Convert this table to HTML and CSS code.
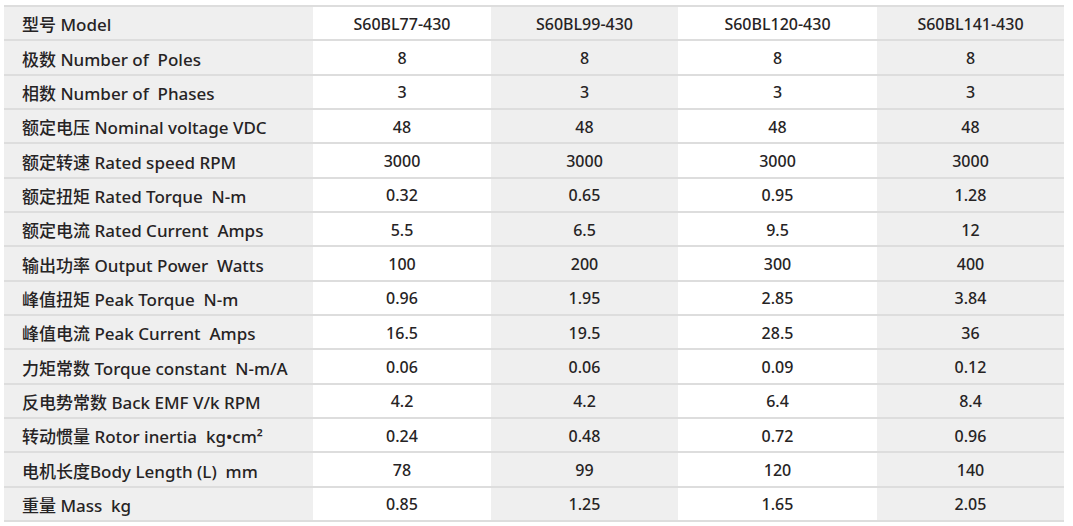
FILE: index.html
```html
<!DOCTYPE html>
<html>
<head>
<meta charset="utf-8">
<link rel="stylesheet" href="styles.css">
</head>
<body>
<div class="spec">
  <div class="row"><div class="c lbl">型号 Model</div><div class="c w">S60BL77-430</div><div class="c g">S60BL99-430</div><div class="c w">S60BL120-430</div><div class="c g">S60BL141-430</div></div>
  <div class="row"><div class="c lbl">极数 Number of&nbsp; Poles</div><div class="c w">8</div><div class="c g">8</div><div class="c w">8</div><div class="c g">8</div></div>
  <div class="row"><div class="c lbl">相数 Number of&nbsp; Phases</div><div class="c w">3</div><div class="c g">3</div><div class="c w">3</div><div class="c g">3</div></div>
  <div class="row"><div class="c lbl">额定电压 Nominal voltage VDC</div><div class="c w">48</div><div class="c g">48</div><div class="c w">48</div><div class="c g">48</div></div>
  <div class="row"><div class="c lbl">额定转速 Rated speed RPM</div><div class="c w">3000</div><div class="c g">3000</div><div class="c w">3000</div><div class="c g">3000</div></div>
  <div class="row"><div class="c lbl">额定扭矩 Rated Torque&nbsp; N-m</div><div class="c w">0.32</div><div class="c g">0.65</div><div class="c w">0.95</div><div class="c g">1.28</div></div>
  <div class="row"><div class="c lbl">额定电流 Rated Current&nbsp; Amps</div><div class="c w">5.5</div><div class="c g">6.5</div><div class="c w">9.5</div><div class="c g">12</div></div>
  <div class="row"><div class="c lbl">输出功率 Output Power&nbsp; Watts</div><div class="c w">100</div><div class="c g">200</div><div class="c w">300</div><div class="c g">400</div></div>
  <div class="row"><div class="c lbl">峰值扭矩 Peak Torque&nbsp; N-m</div><div class="c w">0.96</div><div class="c g">1.95</div><div class="c w">2.85</div><div class="c g">3.84</div></div>
  <div class="row"><div class="c lbl">峰值电流 Peak Current&nbsp; Amps</div><div class="c w">16.5</div><div class="c g">19.5</div><div class="c w">28.5</div><div class="c g">36</div></div>
  <div class="row"><div class="c lbl">力矩常数 Torque constant&nbsp; N-m/A</div><div class="c w">0.06</div><div class="c g">0.06</div><div class="c w">0.09</div><div class="c g">0.12</div></div>
  <div class="row"><div class="c lbl">反电势常数 Back EMF V/k RPM</div><div class="c w">4.2</div><div class="c g">4.2</div><div class="c w">6.4</div><div class="c g">8.4</div></div>
  <div class="row"><div class="c lbl">转动惯量 Rotor inertia&nbsp; kg•cm²</div><div class="c w">0.24</div><div class="c g">0.48</div><div class="c w">0.72</div><div class="c g">0.96</div></div>
  <div class="row"><div class="c lbl">电机长度Body Length (L)&nbsp; mm</div><div class="c w">78</div><div class="c g">99</div><div class="c w">120</div><div class="c g">140</div></div>
  <div class="row last"><div class="c lbl">重量 Mass&nbsp; kg</div><div class="c w">0.85</div><div class="c g">1.25</div><div class="c w">1.65</div><div class="c g">2.05</div></div>
</div>
</body>
</html>
```

FILE: styles.css
```css
html, body {
  margin: 0;
  padding: 0;
  background: #ffffff;
}
body {
  font-family: "Noto Sans", "Noto Sans CJK SC", sans-serif;
  color: #262324;
}
.spec {
  margin: 5px 0 0 4px;
  width: 1060px;
}
.row {
  display: grid;
  grid-template-columns: 309px 178px 187px 199px 187px;
  height: 34.35px;
  box-sizing: border-box;
  border-top: 2px solid #dddddd;
}
.row.last {
  height: 36.35px;
  border-bottom: 2px solid #dddddd;
}
.c {
  display: flex;
  align-items: center;
  justify-content: center;
  font-size: 16px;
  font-weight: 500;
  white-space: nowrap;
  padding-top: 1px;
}
.lbl {
  justify-content: flex-start;
  padding-left: 18px;
  background: #efefef;
  font-size: 17px;
  font-weight: 500;
}
.w { background: #ffffff; }
.g { background: #efefef; }
```
